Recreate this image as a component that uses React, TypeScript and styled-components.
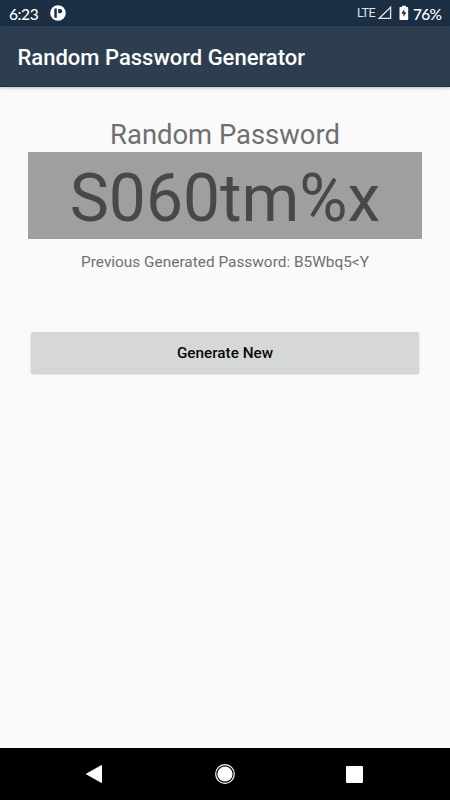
import React, { useState } from "react";
import styled, { createGlobalStyle } from "styled-components";

const GlobalStyle = createGlobalStyle`
  * { box-sizing: border-box; }
  body { margin: 0; background: #fafafa; font-family: Roboto, "Noto Sans", sans-serif; }
`;

const Screen = styled.div`
  display: flex;
  flex-direction: column;
  width: 450px;
  height: 800px;
  overflow: hidden;
  background: #fafafa;
`;

const StatusBar = styled.header`
  display: flex;
  justify-content: space-between;
  height: 26px;
  padding: 0 9px;
  background: #1a2e44;
  color: #fff;
`;

const StatusGroup = styled.div`
  display: flex;
  align-items: center;
`;

const Clock = styled.span`
  width: 41px;
  padding-top: 1px;
  font: 500 15.5px/26px Lato, sans-serif;
  letter-spacing: -0.4px;
  white-space: nowrap;
`;

const Network = styled.span`
  font: 400 12.6px/26px Roboto, sans-serif;
  letter-spacing: -0.6px;
  color: #e4e7ea;
`;

const Battery = styled.span`
  width: 28px;
  padding-top: 1px;
  font: 500 15.5px/26px Lato, sans-serif;
  letter-spacing: -0.8px;
  white-space: nowrap;
`;

const AppBar = styled.div`
  display: flex;
  align-items: center;
  height: 61px;
  padding: 4px 17.5px 0;
  background: #2d3e50;
  border-bottom: 1px solid #12304b;
  box-shadow: 0 1px 3px rgba(0, 0, 0, 0.25);
`;

const Title = styled.h1`
  margin: 0;
  font-size: 22px;
  font-weight: 500;
  line-height: 28px;
  color: #fff;
  white-space: nowrap;
`;

const Content = styled.main`
  display: flex;
  flex: 1;
  flex-direction: column;
  align-items: center;
  padding: 32px 28px 0;
`;

const Heading = styled.h2`
  margin: 0;
  height: 33px;
  font-size: 27.4px;
  font-weight: 400;
  line-height: 32px;
  color: #6f6f6f;
  white-space: nowrap;
`;

const Password = styled.output`
  display: flex;
  align-items: center;
  justify-content: center;
  width: 100%;
  height: 87px;
  padding-top: 7px;
  background: #9f9f9f;
  color: #484848;
  font-size: 65.9px;
  line-height: 80px;
`;

const Previous = styled.p`
  margin: 13px 0 0;
  height: 20px;
  font-size: 15.4px;
  line-height: 20px;
  color: #707070;
  white-space: nowrap;
`;

const GenerateButton = styled.button`
  width: 388px;
  height: 41px;
  margin-top: 60px;
  padding: 0;
  border: 0;
  border-radius: 2px;
  background: #d6d8d7;
  box-shadow: 0 1px 2px rgba(0, 0, 0, 0.22);
  color: #0a0a0a;
  font: 500 15.3px/20px Roboto, sans-serif;
`;

const NavBar = styled.nav`
  display: grid;
  grid-template-columns: 130px 130px 130px;
  justify-content: center;
  align-items: center;
  justify-items: center;
  height: 52px;
  background: #000;
`;

const Icon = styled.svg`
  display: block;
  flex: none;
`;

const symbols = "ABCDEFGHJKLMNPQRSTUVWXYZabcdefghijkmnopqrstuvwxyz0123456789%<>#&";

const createPassword = () =>
  Array.from({ length: 8 }, () => symbols[Math.floor(Math.random() * symbols.length)]).join("");

export default function App() {
  const [passwords, setPasswords] = useState({ current: "S060tm%x", previous: "B5Wbq5<Y" });
  const generate = () =>
    setPasswords(({ current }) => ({ current: createPassword(), previous: current }));

  return (
    <>
      <GlobalStyle />
      <Screen>
        <StatusBar>
          <StatusGroup>
            <Clock>6:23</Clock>
            <Icon width="16" height="16" viewBox="0 0 16 16">
              <circle cx="8" cy="8" r="7.8" fill="#fff" />
              <path d="M4.3 3.5h2.5v9.3H4.3z" fill="#1a2e44" />
              <path d="M8.2 4.1h1.9a2 2 0 0 1 0 4.1H8.2z" fill="#1a2e44" />
            </Icon>
          </StatusGroup>
          <StatusGroup>
            <Network>LTE</Network>
            <Icon width="24" height="16" viewBox="0 0 24 16">
              <path d="M15.6 2.2v11.1H4.2z" fill="none" stroke="#e4e7ea" strokeWidth="1.3" />
            </Icon>
            <Icon width="14" height="16" viewBox="0 0 14 16">
              <path d="M3 2V.8h4V2h1.4a.8.8 0 0 1 .8.8v11.4a.8.8 0 0 1-.8.8H1.3a.8.8 0 0 1-.8-.8V2.8a.8.8 0 0 1 .8-.8z" fill="#fff" />
              <path d="M5.3 4 2.4 8.7h2V12l3-4.8h-2z" fill="#1a2e44" />
            </Icon>
            <Battery>76%</Battery>
          </StatusGroup>
        </StatusBar>
        <AppBar>
          <Title>Random Password Generator</Title>
        </AppBar>
        <Content>
          <Heading>Random Password</Heading>
          <Password>{passwords.current}</Password>
          <Previous>Previous Generated Password: {passwords.previous}</Previous>
          <GenerateButton type="button" onClick={generate}>Generate New</GenerateButton>
        </Content>
        <NavBar>
          <Icon width="20" height="20" viewBox="0 0 20 20">
            <path d="M16.5 1.5v17L1.5 10z" fill="#fff" stroke="#fff" strokeLinejoin="round" />
          </Icon>
          <Icon width="20" height="20" viewBox="0 0 20 20">
            <circle cx="10" cy="10" r="9.3" fill="none" stroke="#fff" strokeWidth="1.2" />
            <circle cx="10" cy="10" r="7.6" fill="#fff" />
          </Icon>
          <Icon width="18" height="17" viewBox="0 0 18 17">
            <rect width="17" height="17" rx="1" fill="#fff" />
          </Icon>
        </NavBar>
      </Screen>
    </>
  );
}
